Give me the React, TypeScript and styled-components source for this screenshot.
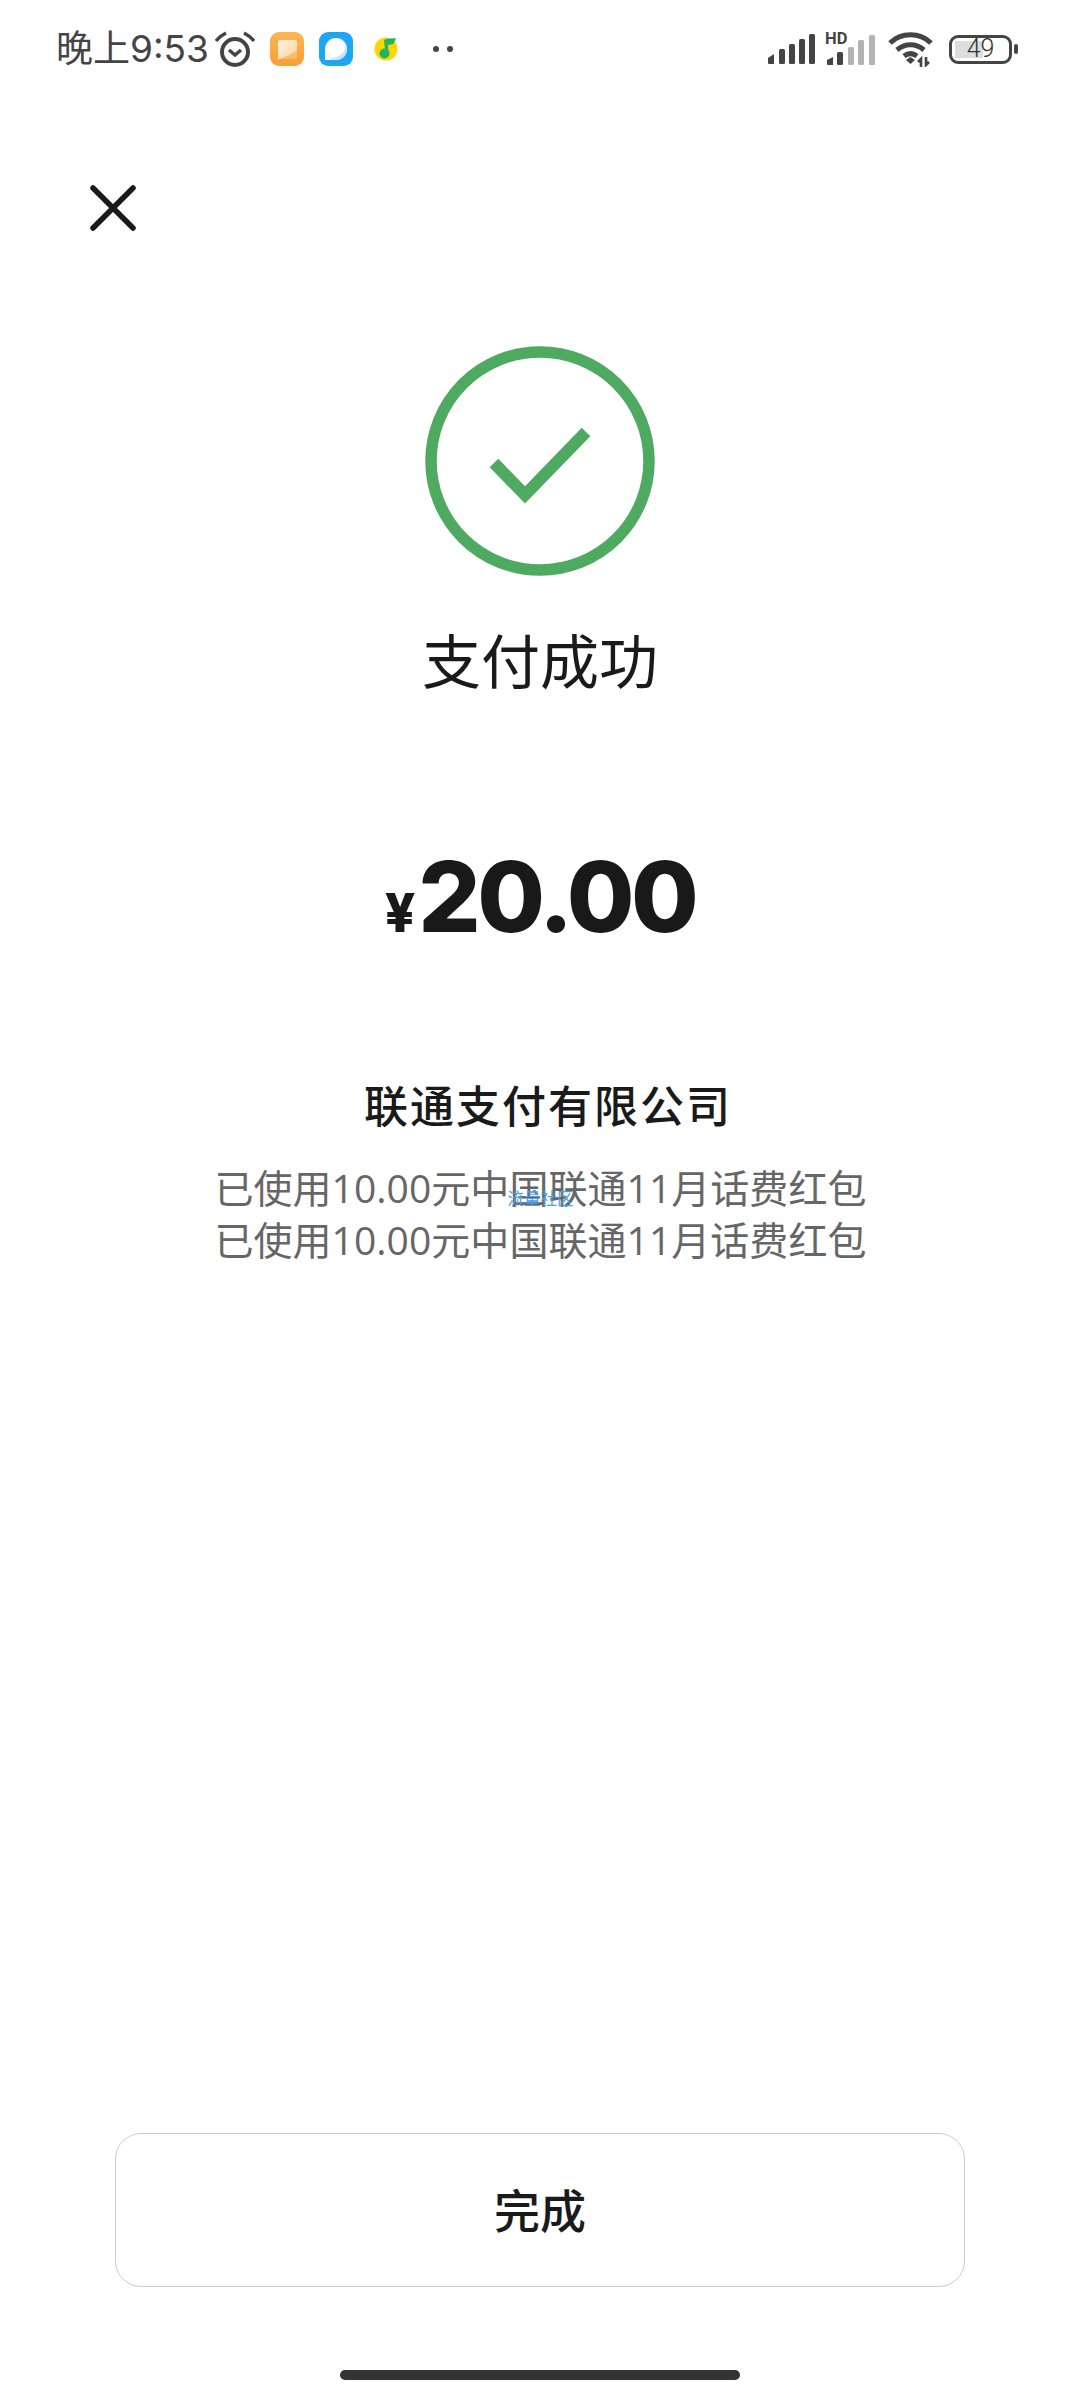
import styled, { createGlobalStyle } from "styled-components";

const CJK = `"Noto Sans CJK SC", "Noto Sans", sans-serif`;

const GlobalStyle = createGlobalStyle`
  html, body {
    margin: 0;
    padding: 0;
    background: #fff;
  }
`;

const Page = styled.div`
  width: 1080px;
  height: 2400px;
  display: flex;
  flex-direction: column;
  background: #fff;
  font-family: ${CJK};
  overflow: hidden;
`;

const StatusBar = styled.div`
  height: 100px;
  padding: 0 62px 2px 56px;
  box-sizing: border-box;
  display: flex;
  align-items: center;
  justify-content: space-between;
`;

const StatusLeft = styled.div`
  display: flex;
  align-items: center;
`;

const StatusRight = styled.div`
  display: flex;
  align-items: center;
`;

const Clock = styled.span`
  font-family: Inter, "Noto Sans CJK SC", sans-serif;
  font-size: 37px;
  line-height: 48px;
  color: #444;
`;

const CloseRow = styled.div`
  height: 245px;
  padding: 85px 0 0 90px;
  box-sizing: border-box;
`;

const CloseIcon = styled.svg`
  display: block;
`;

const SuccessIcon = styled.svg`
  display: block;
`;

const Main = styled.main`
  flex: 1;
  display: flex;
  flex-direction: column;
  align-items: center;
`;

const Title = styled.h1`
  margin: 42px 0 0;
  font-size: 59px;
  line-height: 80px;
  font-weight: 400;
  color: #1a1a1a;
`;

const Amount = styled.div`
  margin-top: 142px;
  display: flex;
  align-items: baseline;
  color: #191919;
  font-family: Inter, "Liberation Sans", sans-serif;
  font-weight: 800;
  height: 112px;
  line-height: 112px;
`;

const Currency = styled.span`
  font-size: 53px;
  margin-right: 3px;
`;

const Value = styled.span`
  font-size: 98px;
  letter-spacing: -3.5px;
`;

const Merchant = styled.div`
  margin-top: 121px;
  margin-left: 16px;
  font-size: 44px;
  line-height: 60px;
  font-weight: 500;
  color: #1a1a1a;
  letter-spacing: 2px;
`;

const Discounts = styled.div`
  position: relative;
  margin-top: 28px;
  margin-left: 1px;
`;

const DiscountLine = styled.div`
  font-family: "Open Sans", ${CJK};
  font-size: 39px;
  line-height: 52px;
  letter-spacing: 0.05px;
  color: #666;
  text-align: center;
  white-space: nowrap;
`;

const Watermark = styled.span`
  position: absolute;
  left: 50%;
  top: 25px;
  transform: translateX(-50%);
  font-family: ${CJK};
  font-size: 16.5px;
  line-height: 22px;
  color: #4b9fe6;
  white-space: nowrap;
`;

const DoneButton = styled.button`
  width: 850px;
  height: 154px;
  margin: 0 auto 83px;
  padding: 0 0 5px;
  display: block;
  background: #fff;
  border: 1.5px solid #cbcbcb;
  border-radius: 26px;
  font-family: ${CJK};
  font-size: 46px;
  font-weight: 500;
  color: #1a1a1a;
`;

const HomeBar = styled.div`
  width: 400px;
  height: 10px;
  border-radius: 5px;
  background: #333;
  margin: 0 auto 20px;
`;

const AppIcon = styled.svg<{ $gap: number }>`
  display: block;
  margin-left: ${(p) => p.$gap}px;
`;

function AlarmIcon() {
  return (
    <AppIcon $gap={6} width="40" height="36" viewBox="0 0 40 36" fill="none" stroke="#444">
      <circle cx="20" cy="21" r="13" strokeWidth="4" />
      <path d="M14 19l6 5 6-5" strokeWidth="3.4" />
      <path d="M1 10C4 6 7 4 11 2M39 10C36 6 33 4 29 2" strokeWidth="3.4" />
    </AppIcon>
  );
}

function NotesIcon() {
  return (
    <AppIcon $gap={15} width="34" height="34" viewBox="0 0 34 34">
      <defs>
        <linearGradient id="notesBg" x1="0" y1="0" x2="0" y2="1">
          <stop offset="0" stopColor="#fdb457" />
          <stop offset="1" stopColor="#f99f33" />
        </linearGradient>
        <linearGradient id="notesPage" x1="0" y1="0" x2="1" y2="1">
          <stop offset="0" stopColor="#fef3e2" />
          <stop offset="1" stopColor="#fbd39c" />
        </linearGradient>
      </defs>
      <rect width="34" height="34" rx="9" fill="url(#notesBg)" />
      <path d="M8 10a2 2 0 0 1 2-2h15a2 2 0 0 1 2 2v15a2 2 0 0 1-2 2H8z" fill="#fff" opacity=".25" />
      <path d="M8 10a2 2 0 0 1 2-2h15a2 2 0 0 1 2 2v8C22 22 14 25 8 28z" fill="url(#notesPage)" />
    </AppIcon>
  );
}

function BrowserIcon() {
  return (
    <AppIcon $gap={15} width="34" height="34" viewBox="0 0 34 34">
      <rect width="34" height="34" rx="9" fill="#1fa5f5" />
      <circle cx="17" cy="17" r="11" fill="#fff" />
      <path d="M6 17v11h11a11 11 0 0 1-11-11z" fill="#fff" />
      <path d="M26 11C28 19 22 26 11 26c6 3 13 2 16-4 1-4 1-8-1-11z" fill="#c9e4fa" />
    </AppIcon>
  );
}

function MusicIcon() {
  return (
    <AppIcon $gap={21} width="24" height="24" viewBox="0 0 24 24">
      <circle cx="12" cy="12" r="11.500" fill="#fbd605" />
      <circle cx="10.500" cy="16.500" r="5" fill="#22b365" />
      <path d="M10 3l2-1 10-1-2.500 6L14 8l.5 9h-3z" fill="#22b365" />
    </AppIcon>
  );
}

function MoreDots() {
  return (
    <AppIcon $gap={34} width="22" height="8" viewBox="0 0 22 8" fill="#444">
      <circle cx="4" cy="4" r="3" />
      <circle cx="18" cy="4" r="3" />
    </AppIcon>
  );
}

const SignalSvg = styled.svg<{ $gap: number }>`
  display: block;
  margin-left: ${(p) => p.$gap}px;
`;

const HdSignal = styled.div`
  position: relative;
  margin-left: 10px;
`;

const HdLabel = styled.span`
  position: absolute;
  left: 0;
  top: -1px;
  font-family: Roboto, sans-serif;
  font-size: 16.500px;
  font-weight: 700;
  line-height: 13px;
  color: #444;
`;

function SignalIcon() {
  return (
    <SignalSvg $gap={0} width="47" height="30" viewBox="0 0 47 30" fill="#444">
      <path d="M0 24l6-4v10H1a1 1 0 0 1-1-1z" />
      <rect x="11" y="15" width="6" height="15" rx="1.500" />
      <rect x="21" y="10" width="6" height="20" rx="1.500" />
      <rect x="31" y="5" width="6" height="25" rx="1.500" />
      <rect x="41" y="0" width="6" height="30" rx="1.500" />
    </SignalSvg>
  );
}

function HdSignalIcon() {
  return (
    <HdSignal>
      <HdLabel>HD</HdLabel>
      <SignalSvg $gap={0} width="50" height="32" viewBox="0 0 50 32">
        <path d="M2 27l6-3v8H3a1 1 0 0 1-1-1z" fill="#444" />
        <rect x="12" y="19" width="6" height="13" rx="1.500" fill="#444" />
        <rect x="23" y="14" width="6" height="18" rx="1.500" fill="#b3b3b3" />
        <rect x="33" y="7" width="6" height="25" rx="1.500" fill="#b3b3b3" />
        <rect x="44" y="2" width="6" height="30" rx="1.500" fill="#b3b3b3" />
      </SignalSvg>
    </HdSignal>
  );
}

function WifiIcon() {
  return (
    <SignalSvg $gap={13} width="45" height="36" viewBox="0 0 45 36" fill="none" stroke="#444" strokeWidth="5">
      <path d="M2 12C13 1 32 1 43 12" />
      <path d="M9 19C17 12 28 12 36 19" />
      <path d="M16 25C20 22 25 22 29 25" />
      <path d="M18 29l4.500-3 4.500 3-4.500 4z" fill="#444" stroke="none" />
      <path d="M33 36v-8l-3 3M38 26v8l3-3" strokeWidth="2.600" />
    </SignalSvg>
  );
}

const Battery = styled.div`
  margin-left: 16px;
  display: flex;
  align-items: center;
`;

const BatteryBody = styled.div`
  position: relative;
  width: 63px;
  height: 29px;
  box-sizing: border-box;
  border: 3.5px solid #444;
  border-radius: 9px;
  display: flex;
  align-items: center;
  justify-content: center;
  overflow: hidden;
`;

const BatteryFill = styled.div`
  position: absolute;
  left: 3px;
  top: 3px;
  bottom: 3px;
  background: #ddd;
`;

const BatteryLevel = styled.span`
  position: relative;
  font-family: Roboto, sans-serif;
  font-size: 25px;
  font-weight: 300;
  line-height: 22px;
  color: #333;
`;

const BatteryCap = styled.div`
  width: 4px;
  height: 10px;
  margin-left: 2px;
  border-radius: 2px;
  background: #444;
`;

export default function App() {
  const batteryLevel = 49;

  return (
    <Page>
      <GlobalStyle />
      <StatusBar>
        <StatusLeft>
          <Clock>晚上9:53</Clock>
          <AlarmIcon />
          <NotesIcon />
          <BrowserIcon />
          <MusicIcon />
          <MoreDots />
        </StatusLeft>
        <StatusRight>
          <SignalIcon />
          <HdSignalIcon />
          <WifiIcon />
          <Battery>
            <BatteryBody>
              <BatteryFill style={{ width: `${batteryLevel}%` }} />
              <BatteryLevel>{batteryLevel}</BatteryLevel>
            </BatteryBody>
            <BatteryCap />
          </Battery>
        </StatusRight>
      </StatusBar>

      <CloseRow>
        <CloseIcon width="46" height="46" viewBox="0 0 46 46" stroke="#1a1a1a" strokeWidth="5.500" strokeLinecap="round" fill="none">
          <path d="M3 3l40 40M43 3L3 43" />
        </CloseIcon>
      </CloseRow>

      <Main>
        <SuccessIcon width="232" height="232" viewBox="0 0 232 232" fill="none" stroke="#4faa61" strokeWidth="11.500">
          <circle cx="116" cy="116" r="109" />
          <path d="M70 118l31 32 61-63" strokeWidth="12" />
        </SuccessIcon>
        <Title>支付成功</Title>
        <Amount>
          <Currency>¥</Currency>
          <Value>20.00</Value>
        </Amount>
        <Merchant>联通支付有限公司</Merchant>
        <Discounts>
          <DiscountLine>已使用10.00元中国联通11月话费红包</DiscountLine>
          <DiscountLine>已使用10.00元中国联通11月话费红包</DiscountLine>
          <Watermark>流量社区</Watermark>
        </Discounts>
      </Main>

      <DoneButton>完成</DoneButton>
      <HomeBar />
    </Page>
  );
}
